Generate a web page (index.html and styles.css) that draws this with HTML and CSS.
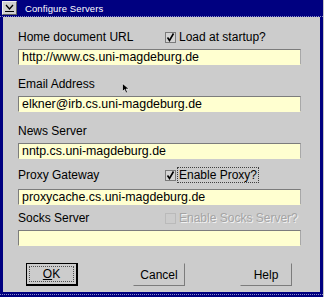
FILE: index.html
```html
<!DOCTYPE html>
<html lang="en">
<head>
    <meta charset="UTF-8">
    <title>Configure Servers</title>
    <link rel="stylesheet" href="styles.css">
</head>
<body>
    <div class="window">
        <div class="titlebar">
            <div class="sysmenu">
                <svg width="11" height="9" viewBox="0 0 11 9">
                    <polyline points="2,1 5.5,5 9,1" fill="none" stroke="#000" stroke-width="1.3"/>
                    <line x1="1" y1="7.5" x2="10" y2="7.5" stroke="#000" stroke-width="1"/>
                </svg>
            </div>
            <span class="title">Configure Servers</span>
        </div>

        <div class="client">
            <div class="group">
                <div class="label-row">
                    <span class="label">Home document URL</span>
                    <span class="check">
                        <svg class="box" width="11" height="11" viewBox="0 0 11 11">
                            <rect x="0.5" y="0.5" width="10" height="10" fill="#d4d4d4" stroke="#7a7a7a"/>
                            <polyline points="2.5,5.5 4.5,8.5 8.5,1.5" fill="none" stroke="#000" stroke-width="1.6"/>
                        </svg>
                        Load at startup?
                    </span>
                </div>
                <div class="entry">http://www.cs.uni-magdeburg.de</div>
            </div>

            <div class="group">
                <div class="label-row"><span class="label">Email Address</span></div>
                <div class="entry">elkner@irb.cs.uni-magdeburg.de</div>
            </div>

            <div class="group">
                <div class="label-row"><span class="label">News Server</span></div>
                <div class="entry">nntp.cs.uni-magdeburg.de</div>
            </div>

            <div class="group proxy">
                <div class="label-row">
                    <span class="label">Proxy Gateway</span>
                    <span class="check">
                        <svg class="box" width="11" height="11" viewBox="0 0 11 11">
                            <rect x="0.5" y="0.5" width="10" height="10" fill="#d4d4d4" stroke="#7a7a7a"/>
                            <polyline points="2.5,5.5 4.5,8.5 8.5,1.5" fill="none" stroke="#000" stroke-width="1.6"/>
                        </svg>
                        <span class="focus">Enable Proxy?</span>
                    </span>
                </div>
                <div class="entry">proxycache.cs.uni-magdeburg.de</div>
            </div>

            <div class="group socks">
                <div class="label-row">
                    <span class="label">Socks Server</span>
                    <span class="check disabled">
                        <svg class="box" width="11" height="11" viewBox="0 0 11 11">
                            <rect x="0.5" y="0.5" width="10" height="10" fill="none" stroke="#a8a8a8" stroke-dasharray="1 1"/>
                        </svg>
                        Enable Socks Server?
                    </span>
                </div>
                <div class="entry"></div>
            </div>

            <div class="buttons">
                <div class="btn default"><span class="btn-focus"><u>O</u>K</span></div>
                <div class="btn">Cancel</div>
                <div class="btn">Help</div>
            </div>
        </div>

        <svg class="pointer" width="8" height="11" viewBox="0 0 8 11">
            <polygon points="0.5,0.5 0.5,8.5 2.5,6.5 4,10 5.5,9.3 4,6 7,6" fill="#000" stroke="#fff" stroke-width="0.6"/>
        </svg>
    </div>
</body>
</html>
```

FILE: styles.css
```css
body {
    margin: 0;
    background: #c4c4c4;
    font-family: 'Liberation Sans', Arial, sans-serif;
    color: #000;
}
.window {
    position: relative;
    width: 317px;
    border-left: 3px solid #000080;
    border-right: 3px solid #000080;
    border-bottom: 5px solid #000080;
    background: #cccccc;
}
/* dotted inner line of the bottom frame */
.window::after {
    content: '';
    position: absolute;
    left: -3px;
    right: -3px;
    bottom: -3px;
    border-top: 1px dotted #8c8cc8;
}
.titlebar {
    display: flex;
    align-items: center;
    height: 16px;
    margin: 0 -3px;
    padding: 0 3px;
    background: #000080;
    border-bottom: 1px dotted #8c8cc8;
}
.sysmenu {
    display: flex;
    align-items: center;
    justify-content: center;
    width: 13px;
    height: 12px;
    margin-left: -1px;
    background: #d0d0d0;
    border: 1px solid;
    border-color: #f0f0f0 #606060 #606060 #f0f0f0;
}
.title {
    margin-left: 8px;
    color: #fff;
    font-size: 9.5px;
    letter-spacing: 0.1px;
}
.client {
    height: 275px;
    box-sizing: border-box;
    padding: 12px 0 0 15px;
}
.group + .group {
    margin-top: 11px;
}
.group.proxy {
    margin-top: 8px;
}
.group.proxy .entry {
    margin-top: 6px;
}
.group.socks {
    margin-top: 5px;
}
.label-row {
    display: flex;
    align-items: center;
    height: 16px;
    font-size: 12px;
}
.label {
    width: 147px;
}
.check {
    display: flex;
    align-items: center;
}
.check .box {
    margin-right: 3px;
}
.focus {
    border: 1px dotted #404040;
    padding: 0 1px;
    margin-left: -2px;
}
.check.disabled {
    color: #a4a4a4;
    text-shadow: 1px 1px 0 #f2f2f2;
}
.entry {
    box-sizing: border-box;
    width: 283px;
    height: 16px;
    margin-top: 4px;
    padding: 0 3px;
    background: #ffffd0;
    border: 1px solid;
    border-color: #7c7c7c #a8a8a8 #ffffd0 #7c7c7c;
    font-size: 12.4px;
    line-height: 14px;
}
.buttons {
    display: flex;
    gap: 55px;
    margin: 17px 0 0 8px;
}
.btn {
    box-sizing: border-box;
    width: 52px;
    height: 23px;
    display: flex;
    align-items: center;
    justify-content: center;
    font-size: 12px;
    border: 1px solid;
    border-color: #cccccc #7c7c7c #7c7c7c #cccccc;
}
.btn.default {
    border: 1px solid #000;
    border-right-width: 2px;
    border-bottom-width: 2px;
    padding: 2px;
}
.btn-focus {
    flex: 1;
    align-self: stretch;
    display: flex;
    align-items: center;
    justify-content: center;
    border: 1px dotted #505050;
}
.pointer {
    position: absolute;
    left: 119px;
    top: 83px;
}
```
